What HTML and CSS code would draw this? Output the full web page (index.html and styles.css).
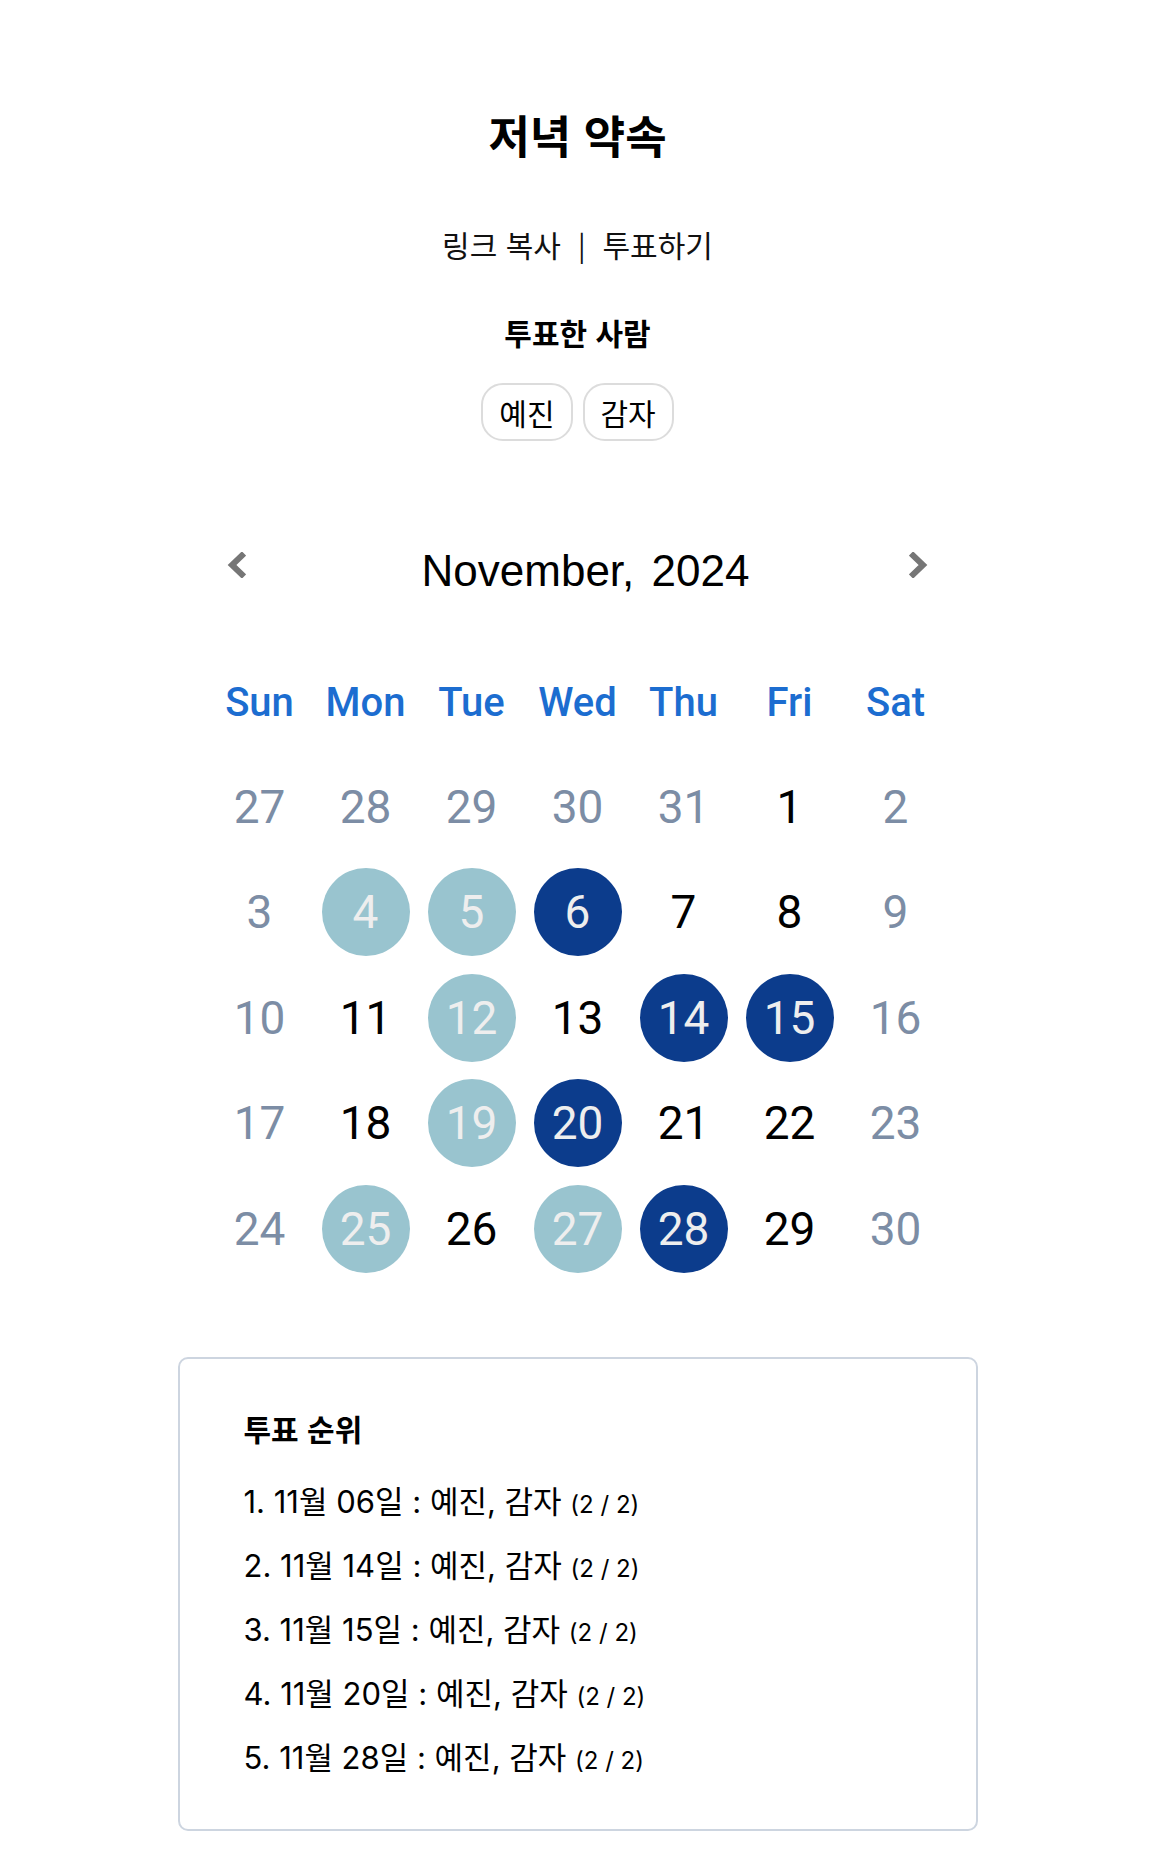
FILE: index.html
```html
<!DOCTYPE html>
<html lang="ko">
<head>
<meta charset="utf-8">
<title>저녁 약속</title>
<link rel="stylesheet" href="styles.css">
</head>
<body>
<main class="page">
  <h1 class="title">저녁 약속</h1>
  <nav class="links">
    <a class="link">링크 복사</a>
    <span class="sep">|</span>
    <a class="link">투표하기</a>
  </nav>
  <h2 class="voters-title">투표한 사람</h2>
  <div class="chips">
    <span class="chip">예진</span>
    <span class="chip">감자</span>
  </div>

  <section class="calendar">
    <div class="cal-nav">
      <button class="arrow" aria-label="이전 달">
        <svg width="20" height="26" viewBox="0 0 20 26"><polyline points="18,1.5 6,13 18,24.5" fill="none" stroke="#767676" stroke-width="6" stroke-linejoin="miter" stroke-miterlimit="10"/></svg>
      </button>
      <div class="month"><span>November,</span> <span>2024</span></div>
      <button class="arrow" aria-label="다음 달">
        <svg width="20" height="26" viewBox="0 0 20 26"><polyline points="2,1.5 14,13 2,24.5" fill="none" stroke="#767676" stroke-width="6" stroke-linejoin="miter" stroke-miterlimit="10"/></svg>
      </button>
    </div>
    <div class="weekdays">
      <span>Sun</span><span>Mon</span><span>Tue</span><span>Wed</span><span>Thu</span><span>Fri</span><span>Sat</span>
    </div>
    <div class="days">
      <span class="day muted">27</span><span class="day muted">28</span><span class="day muted">29</span><span class="day muted">30</span><span class="day muted">31</span><span class="day">1</span><span class="day muted">2</span>
      <span class="day muted">3</span><span class="day light">4</span><span class="day light">5</span><span class="day dark">6</span><span class="day">7</span><span class="day">8</span><span class="day muted">9</span>
      <span class="day muted">10</span><span class="day">11</span><span class="day light">12</span><span class="day">13</span><span class="day dark">14</span><span class="day dark">15</span><span class="day muted">16</span>
      <span class="day muted">17</span><span class="day">18</span><span class="day light">19</span><span class="day dark">20</span><span class="day">21</span><span class="day">22</span><span class="day muted">23</span>
      <span class="day muted">24</span><span class="day light">25</span><span class="day">26</span><span class="day light">27</span><span class="day dark">28</span><span class="day">29</span><span class="day muted">30</span>
    </div>
  </section>

  <section class="ranking">
    <h3 class="ranking-title">투표 순위</h3>
    <ol class="rank-list">
      <li>1. 11월 06일 : 예진, 감자 <small>(2 / 2)</small></li>
      <li>2. 11월 14일 : 예진, 감자 <small>(2 / 2)</small></li>
      <li>3. 11월 15일 : 예진, 감자 <small>(2 / 2)</small></li>
      <li>4. 11월 20일 : 예진, 감자 <small>(2 / 2)</small></li>
      <li>5. 11월 28일 : 예진, 감자 <small>(2 / 2)</small></li>
    </ol>
  </section>
</main>
</body>
</html>
```

FILE: styles.css
```css
* { box-sizing: border-box; }
html, body { margin: 0; padding: 0; background: #fff; }
body {
  font-family: "Noto Sans CJK KR", "Noto Sans", sans-serif;
  color: #000;
}
.page {
  width: 1155px;
  padding-top: 110px;
  padding-bottom: 27px;
  display: flex;
  flex-direction: column;
  align-items: center;
}
.title {
  margin: 0;
  font-size: 45px;
  line-height: 50px;
  font-weight: 700;
}
.links {
  margin-top: 64px;
  display: flex;
  align-items: center;
  gap: 17px;
  font-size: 30px;
  line-height: 40px;
  color: #111;
}
.link { cursor: pointer; }
.sep { font-size: 28px; }
.voters-title {
  margin: 48px 0 0;
  font-size: 30px;
  line-height: 40px;
  font-weight: 700;
}
.chips {
  margin-top: 31px;
  display: flex;
  gap: 10px;
}
.chip {
  height: 58px;
  padding: 0 16px;
  border: 2px solid #dcdcdc;
  border-radius: 22px;
  font-size: 30px;
  line-height: 54px;
}
.calendar {
  margin-top: 100px;
  width: 742px;
}
.cal-nav {
  height: 60px;
  display: flex;
  align-items: center;
  justify-content: space-between;
  padding: 0 19px;
}
.arrow {
  border: 0;
  background: none;
  padding: 0;
  width: 20px;
  height: 26px;
  margin-bottom: 13px;
  display: flex;
}
.month {
  font-family: "Liberation Sans", Arial, sans-serif;
  font-size: 44px;
  line-height: 60px;
  padding-left: 16px;
  word-spacing: 5px;
}
.weekdays {
  margin-top: 49px;
  display: grid;
  grid-template-columns: repeat(7, 106px);
  height: 104px;
  align-items: center;
  font-family: Roboto, sans-serif;
  font-weight: 500;
  font-size: 40px;
  color: #1c6dd0;
  text-align: center;
}
.days {
  display: grid;
  grid-template-columns: repeat(7, 106px);
  grid-auto-rows: 105.5px;
  font-family: Roboto, sans-serif;
  font-size: 46px;
}
.day {
  display: flex;
  align-items: center;
  justify-content: center;
  width: 88px;
  height: 88px;
  margin: auto;
  border-radius: 50%;
  color: #000;
  line-height: 1;
}
.day.muted { color: #7c8da5; }
.day.light { background: #99c4cf; color: #eeeeee; }
.day.dark { background: #0c3c8c; color: #eeeeee; }
.ranking {
  margin-top: 75px;
  width: 800px;
  border: 2px solid #cdd5e0;
  border-radius: 10px;
  padding: 49px 64px 39px;
}
.ranking-title {
  margin: 0;
  font-size: 30px;
  line-height: 40px;
  font-weight: 700;
}
.rank-list {
  list-style: none;
  margin: 22px 0 0;
  padding: 0;
  font-family: Inter, "Noto Sans CJK KR", sans-serif;
  font-size: 31px;
}
.rank-list li {
  height: 64px;
  line-height: 64px;
}
.rank-list small {
  font-size: 24px;
}
```
